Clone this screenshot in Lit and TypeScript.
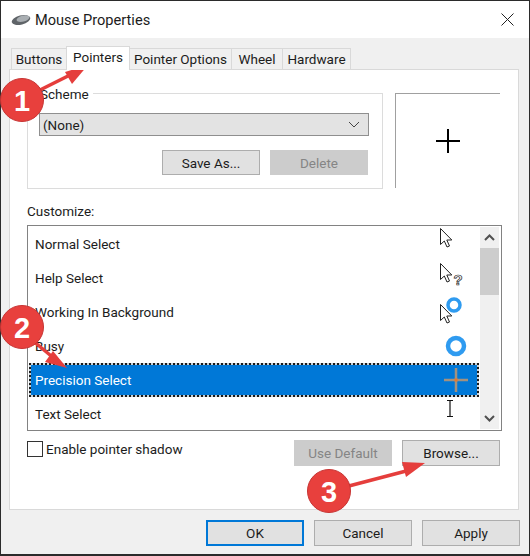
import { LitElement, html, css, svg } from 'lit';
import { customElement } from 'lit/decorators.js';

const arrow = svg`<path d="M2.5 1.5V17.5L6.3 14L9 20L11.5 19L8.8 13H13.8Z" fill="#fff" stroke="#222" stroke-width="1" stroke-linejoin="round"/>`;

const cursors = {
  normal: svg`${arrow}`,
  help: svg`<g transform="translate(0 1)">${arrow}</g>
    <text x="15.5" y="24" class="help">?</text>`,
  working: svg`<circle cx="16" cy="10" r="6" fill="none" stroke="#2f9bf0" stroke-width="3.5"/>
    <g transform="translate(0 8)">${arrow}</g>`,
  busy: svg`<circle cx="18" cy="17" r="8" fill="none" stroke="#2f9bf0" stroke-width="4.5"/>`,
  precision: svg`<path d="M6 17H30M18 5V29" stroke="#a2917f" stroke-width="2.5"/>
    <rect x="16.5" y="15.5" width="3" height="3" fill="#e8792c"/>`,
  text: svg`<path d="M9 3.5H15M9 19.5H15M12 3.5V19.5" stroke="#111" stroke-width="1.2" fill="none"/>`,
} as const;

const rows: { label: string; cursor: keyof typeof cursors; selected?: boolean }[] = [
  { label: 'Normal Select', cursor: 'normal' },
  { label: 'Help Select', cursor: 'help' },
  { label: 'Working In Background', cursor: 'working' },
  { label: 'Busy', cursor: 'busy' },
  { label: 'Precision Select', cursor: 'precision', selected: true },
  { label: 'Text Select', cursor: 'text' },
];

const tabs = [
  { label: 'Buttons', width: 56 },
  { label: 'Pointers', width: 64 },
  { label: 'Pointer Options', width: 103 },
  { label: 'Wheel', width: 52 },
  { label: 'Hardware', width: 69 },
];

@customElement('app-root')
export class AppRoot extends LitElement {
  static styles = css`
    :host {
      display: block;
      position: relative;
      width: 530px;
      height: 556px;
      overflow: hidden;
      font-family: Roboto, 'Liberation Sans', sans-serif;
      font-size: 13.5px;
      color: #1c1c1c;
    }
    .window {
      box-sizing: border-box;
      height: 556px;
      display: flex;
      flex-direction: column;
      background: #f0f0f0;
      border: 1px solid #2b2b2b;
      border-bottom-width: 2px;
    }
    .titlebar {
      flex: none;
      height: 37px;
      display: flex;
      align-items: center;
      padding: 0 15px 0 10px;
      background: #fff;
      font-size: 14.6px;
    }
    .titlebar .name { margin-left: 4px; flex: 1; }
    .tabs {
      flex: none;
      display: flex;
      align-items: flex-end;
      height: 23px;
      padding: 8px 0 0 10px;
    }
    .tab {
      height: 21px;
      line-height: 21px;
      text-align: center;
      box-sizing: border-box;
      border: 1px solid #d9d9d9;
      border-bottom: none;
      margin-right: -1px;
    }
    .tab.active {
      position: relative;
      height: 24px;
      line-height: 20px;
      margin-bottom: -1px;
      background: #fff;
      z-index: 1;
    }
    .panel {
      flex: 1;
      margin: 0 10px 0 8px;
      padding: 23px 16px 0 17px;
      background: #fff;
      border: 1px solid #d9d9d9;
    }
    .top { display: flex; gap: 12px; }
    .group {
      box-sizing: border-box;
      width: 356px;
      height: 96px;
      border: 1px solid #dcdcdc;
      padding: 0 13px 0 11px;
    }
    .legend {
      display: block;
      width: fit-content;
      height: 18px;
      line-height: 18px;
      margin-top: -9px;
      padding: 0 4px 0 1px;
      background: #fff;
    }
    .select {
      box-sizing: border-box;
      height: 23px;
      margin-top: 10px;
      padding: 0 8px 0 3px;
      display: flex;
      align-items: center;
      justify-content: space-between;
      background: #e3e3e3;
      border: 1px solid #8f8f8f;
    }
    .group-actions {
      display: flex;
      justify-content: flex-end;
      gap: 10px;
      margin-top: 14px;
      padding-right: 1px;
    }
    .btn {
      box-sizing: border-box;
      width: 98px;
      height: 26px;
      display: flex;
      align-items: center;
      justify-content: center;
      background: #e1e1e1;
      border: 1px solid #adadad;
    }
    .group-actions .btn { height: 25px; }
    .btn.off { background: #cccccc; border-color: #cccccc; color: #858585; }
    .btn.default { border: 2px solid #0078d7; }
    .preview {
      box-sizing: border-box;
      width: 105px;
      height: 95px;
      display: flex;
      align-items: center;
      justify-content: center;
      border-top: 1px solid #a0a0a0;
      border-left: 1px solid #a0a0a0;
    }
    .label { height: 16px; line-height: 16px; margin-top: 14px; margin-bottom: 6px; }
    .list {
      box-sizing: border-box;
      height: 206px;
      display: flex;
      gap: 1px;
      padding: 1px 2px 0 1px;
      border: 1px solid #828282;
      overflow: hidden;
    }
    .rows { flex: 1; min-width: 0; }
    .row {
      box-sizing: border-box;
      height: 34px;
      display: flex;
      align-items: center;
      justify-content: space-between;
      padding-left: 6px;
      padding-right: 9px;
    }
    .row.selected {
      padding-left: 4px;
      padding-right: 7px;
      color: #fff;
      border: 2px dotted #1a1a1a;
      background: linear-gradient(#0078d7, #0078d7) padding-box, #c9d3d9 border-box;
    }
    .cursor { width: 32px; height: 34px; flex: none; overflow: visible; }
    .row.selected .cursor { margin: -2px 0; }
    .help {
      font: bold 15px 'Liberation Sans', sans-serif;
      fill: #fff;
      stroke: #222;
      stroke-width: 0.7px;
    }
    .scrollbar {
      flex: none;
      width: 19px;
      height: 202px;
      display: flex;
      flex-direction: column;
      background: #f0f0f0;
    }
    .step { height: 21px; display: flex; align-items: center; justify-content: center; flex: none; }
    .track { flex: 1; }
    .thumb { height: 47px; background: #cdcdcd; }
    .options {
      display: flex;
      gap: 10px;
      margin-top: 9px;
      padding-right: 2px;
    }
    .check {
      flex: 1;
      display: flex;
      align-items: center;
      gap: 3px;
      height: 18px;
    }
    .box {
      box-sizing: border-box;
      width: 16px;
      height: 16px;
      background: #fff;
      border: 1px solid #333;
    }
    .footer {
      flex: none;
      display: flex;
      justify-content: flex-end;
      gap: 10px;
      padding: 10px 9px 8px 0;
    }
    .marks {
      position: absolute;
      inset: 0;
      width: 530px;
      height: 556px;
      pointer-events: none;
    }
    .digit {
      font: bold 29px 'Liberation Sans', sans-serif;
      fill: #fff;
      text-anchor: middle;
    }
  `;

  private renderMark(cx: number, cy: number, digit: string, line: string, head: string) {
    return svg`
      <path d=${line} stroke="#e53e3c" stroke-width="3.5" fill="none"/>
      <polygon points=${head} fill="#e53e3c"/>
      <circle cx=${cx} cy=${cy} r="21.5" fill="#e8403d" stroke="#c73433" stroke-width="1"/>
      <text x=${cx} y=${cy + 10.5} class="digit">${digit}</text>
    `;
  }

  render() {
    return html`
      <div class="window">
        <div class="titlebar">
          <svg width="20" height="14" viewBox="0 0 20 14">
            <ellipse cx="10" cy="7" rx="9.5" ry="4.6" transform="rotate(-14 10 7)" fill="#5f6468"/>
            <ellipse cx="12" cy="5.6" rx="6.6" ry="3" transform="rotate(-14 12 5.6)" fill="#a9aeb2"/>
          </svg>
          <span class="name">Mouse Properties</span>
          <svg width="13" height="13" viewBox="0 0 13 13">
            <path d="M.5.5L12.5 12.5M12.5.5L.5 12.5" stroke="#222" stroke-width="1" fill="none"/>
          </svg>
        </div>
        <div class="tabs">
          ${tabs.map(
            (t) => html`<div class="tab ${t.label === 'Pointers' ? 'active' : ''}" style="width:${t.width}px">${t.label}</div>`,
          )}
        </div>
        <div class="panel">
          <div class="top">
            <div class="group">
              <span class="legend">Scheme</span>
              <div class="select">
                <span>(None)</span>
                <svg width="12" height="7" viewBox="0 0 12 7">
                  <path d="M1 1L6 6L11 1" stroke="#444" stroke-width="1" fill="none"/>
                </svg>
              </div>
              <div class="group-actions">
                <div class="btn">Save As...</div>
                <div class="btn off">Delete</div>
              </div>
            </div>
            <div class="preview">
              <svg width="24" height="24" viewBox="0 0 24 24">
                <path d="M0 12H24M12 0V24" stroke="#000" stroke-width="2"/>
              </svg>
            </div>
          </div>
          <div class="label">Customize:</div>
          <div class="list">
            <div class="rows">
              ${rows.map(
                (r) => html`
                  <div class="row ${r.selected ? 'selected' : ''}">
                    <span>${r.label}</span>
                    <svg class="cursor" viewBox="0 0 32 34">${cursors[r.cursor]}</svg>
                  </div>
                `,
              )}
            </div>
            <div class="scrollbar">
              <div class="step">
                <svg width="11" height="7" viewBox="0 0 11 7">
                  <path d="M1 6L5.5 1.5L10 6" stroke="#505050" stroke-width="2" fill="none"/>
                </svg>
              </div>
              <div class="thumb"></div>
              <div class="track"></div>
              <div class="step">
                <svg width="11" height="7" viewBox="0 0 11 7">
                  <path d="M1 1L5.5 5.5L10 1" stroke="#505050" stroke-width="2" fill="none"/>
                </svg>
              </div>
            </div>
          </div>
          <div class="options">
            <div class="check"><span class="box"></span><span>Enable pointer shadow</span></div>
            <div class="btn off">Use Default</div>
            <div class="btn">Browse...</div>
          </div>
        </div>
        <div class="footer">
          <div class="btn default">OK</div>
          <div class="btn">Cancel</div>
          <div class="btn">Apply</div>
        </div>
      </div>
      <svg class="marks" viewBox="0 0 530 556">
        ${this.renderMark(22, 100, '1', 'M36 92L74 73', '88,65 65,72 72,84')}
        ${this.renderMark(22, 327, '2', 'M32 340L56 360', '67,368 45,362 53,351')}
        ${this.renderMark(329, 491, '3', 'M345 487L410 470', '425,463 402,462 406,477')}
      </svg>
    `;
  }
}
